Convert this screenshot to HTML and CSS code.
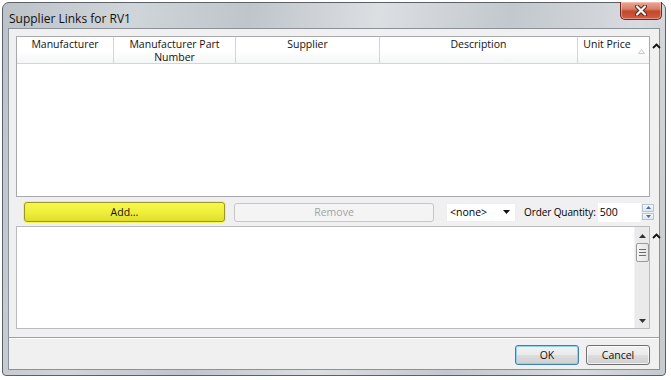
FILE: index.html
```html
<!DOCTYPE html>
<html lang="en">
<head>
  <meta charset="UTF-8" />
  <title>Supplier Links for RV1</title>
  <link rel="stylesheet" href="styles.css">
</head>
<body>
  <div class="window">
    <div class="titlebar">
      <span class="title">Supplier Links for RV1</span>
      <button class="close-btn">
        <svg width="14" height="11" viewBox="0 0 14 11">
          <path d="M3 1.5 L11 9.5 M11 1.5 L3 9.5" stroke="#5a2418" stroke-width="4" stroke-linecap="round"/>
          <path d="M3 1.5 L11 9.5 M11 1.5 L3 9.5" stroke="#ffffff" stroke-width="2.2" stroke-linecap="round"/>
        </svg>
      </button>
    </div>

    <div class="client">
      <div class="pane">
        <div class="grid-box">
          <div class="grid-head">
            <div class="col">Manufacturer</div>
            <div class="col">Manufacturer Part<br>Number</div>
            <div class="col">Supplier</div>
            <div class="col">Description</div>
            <div class="col col-sort">Unit Price
              <svg class="sort-mark" width="7" height="5" viewBox="0 0 7 5"><path d="M0.5 4.5 L3.5 0.5 L6.5 4.5 Z" fill="none" stroke="#c9c9c9"/></svg>
            </div>
          </div>
        </div>
        <div class="splitter">
          <svg width="9" height="6" viewBox="0 0 9 6"><path d="M1 5 L4.5 1.5 L8 5" fill="none" stroke="#111" stroke-width="1.8"/></svg>
        </div>
      </div>

      <div class="toolbar">
        <button class="btn btn-add">Add...</button>
        <button class="btn btn-remove" disabled>Remove</button>
        <div class="combo">
          <span>&lt;none&gt;</span>
          <svg width="7" height="4" viewBox="0 0 7 4"><path d="M0 0 L7 0 L3.5 4 Z" fill="#111"/></svg>
        </div>
        <span class="qty-label">Order Quantity:</span>
        <div class="qty-input">500</div>
        <div class="spinner">
          <div class="spin-btn"><svg width="5" height="3" viewBox="0 0 5 3"><path d="M0 3 L2.5 0 L5 3 Z" fill="#4a6f96"/></svg></div>
          <div class="spin-btn"><svg width="5" height="3" viewBox="0 0 5 3"><path d="M0 0 L5 0 L2.5 3 Z" fill="#4a6f96"/></svg></div>
        </div>
      </div>

      <div class="pane pane-memo">
        <div class="memo">
          <div class="memo-text"></div>
          <div class="vscroll">
            <svg class="arrow" width="7" height="4" viewBox="0 0 7 4"><path d="M0 4 L3.5 0 L7 4 Z" fill="#333"/></svg>
            <div class="thumb">
              <span></span><span></span><span></span>
            </div>
            <div class="track"></div>
            <svg class="arrow" width="7" height="4" viewBox="0 0 7 4"><path d="M0 0 L7 0 L3.5 4 Z" fill="#333"/></svg>
          </div>
        </div>
        <div class="splitter">
          <svg width="9" height="6" viewBox="0 0 9 6"><path d="M1 5 L4.5 1.5 L8 5" fill="none" stroke="#111" stroke-width="1.8"/></svg>
        </div>
      </div>

      <div class="footer">
        <button class="btn btn-ok">OK</button>
        <button class="btn">Cancel</button>
      </div>
    </div>
  </div>
</body>
</html>
```

FILE: styles.css
```css
* { margin: 0; padding: 0; box-sizing: border-box; }

body {
  background: #ffffff;
  font-family: "Open Sans", "Noto Sans", sans-serif;
  font-size: 10.5px;
  color: #000;
}

.window {
  margin: 2px 0 0 2px;
  width: 664px;
  height: 374px;
  border: 1px solid #5b6168;
  border-radius: 7px 7px 4px 4px;
  padding: 0 5px 5px 5px;
  background: linear-gradient(100deg, #bcc2c8 0%, #d0d5d9 18%, #bfc5cb 34%, #dcdfe2 52%, #c2c8cd 70%, #d8dbdf 88%, #c5cacf 100%);
  display: flex;
  flex-direction: column;
}

.titlebar {
  height: 25px;
  display: flex;
  align-items: flex-start;
}

.title {
  margin: 7px 0 0 1px;
  font-size: 12px;
  color: #111;
}

.close-btn {
  margin: -1px -2px 0 auto;
  width: 42px;
  height: 18px;
  border: 1px solid #6b2a1f;
  border-top: none;
  border-radius: 0 0 5px 5px;
  background: linear-gradient(#e9a896 0%, #d98068 40%, #c4472c 55%, #cf5e40 100%);
  box-shadow: inset 0 0 0 1px rgba(255, 220, 210, 0.45);
  display: flex;
  align-items: center;
  justify-content: center;
}

.client {
  flex: 1;
  border: 1px solid #8b9198;
  background: #f0f0f0;
  padding: 7px 0 0 7px;
  display: flex;
  flex-direction: column;
}

.pane {
  display: flex;
  height: 161px;
}

.pane-memo {
  height: 103px;
  margin-top: 4px;
}

.splitter {
  width: 9px;
  padding: 2px 0 0 2px;
}

.grid-box {
  flex: 1;
  border: 1px solid #a7a9ad;
  background: #ffffff;
}

.grid-head {
  display: grid;
  grid-template-columns: 97px 122px 144px 198px 1fr;
  height: 27px;
  border-bottom: 1px solid #d5d5d5;
  background: linear-gradient(#ffffff 0%, #ffffff 50%, #f5f6f7 100%);
}

.col {
  border-right: 1px solid #d5d5d5;
  text-align: center;
  line-height: 13px;
  padding-top: 1px;
  color: #111;
}

.col:last-child { border-right: none; }

.col-sort {
  position: relative;
  padding-right: 13px;
}

.sort-mark {
  position: absolute;
  right: 4px;
  bottom: 10px;
}

.toolbar {
  display: flex;
  align-items: center;
  height: 20px;
  margin-top: 5px;
  padding: 0 5px 0 8px;
}

.btn {
  font-family: inherit;
  font-size: 10.5px;
  color: #111;
  height: 20px;
  width: 64px;
  border: 1px solid #707070;
  border-radius: 3px;
  background: linear-gradient(#f2f2f2 0%, #ebebeb 48%, #dddddd 52%, #cfcfcf 100%);
  box-shadow: inset 0 0 0 1px rgba(255, 255, 255, 0.7);
}

.btn-add {
  width: 201px;
  flex: none;
  border-color: #9c9626;
  background: linear-gradient(#f7f74c 0%, #efef3c 50%, #e0de2e 100%);
  box-shadow: 0 0 0 1px #f5f560;
}

.btn-remove {
  width: 200px;
  flex: none;
  height: 19px;
  margin-left: 9px;
  border-color: #c6c6c6;
  background: #f4f4f4;
  box-shadow: none;
  color: #a3a3a3;
}

.combo {
  margin-left: 12px;
  width: 70px;
  flex: none;
  height: 19px;
  background: #ffffff;
  border: 1px solid #eceef0;
  display: flex;
  align-items: center;
  justify-content: space-between;
  padding: 0 5px 0 3px;
}

.qty-label {
  margin-left: 8px;
  white-space: nowrap;
  flex: none;
  font-size: 10px;
  letter-spacing: -0.1px;
}

.qty-input {
  flex: 1;
  min-width: 0;
  margin-left: 2px;
  height: 19px;
  background: #ffffff;
  line-height: 18px;
  padding-left: 2px;
}

.spinner {
  width: 12px;
  flex: none;
  height: 16px;
  margin-left: 1px;
  display: flex;
  flex-direction: column;
  gap: 1px;
}

.spin-btn {
  flex: 1;
  border: 1px solid #b5c3d2;
  background: linear-gradient(#f4f8fc, #dde7f1);
  display: flex;
  align-items: center;
  justify-content: center;
}

.memo {
  flex: 1;
  border: 1px solid #b9bbbe;
  background: #ffffff;
  display: flex;
}

.memo-text { flex: 1; }

.vscroll {
  width: 15px;
  background: #eaeaea;
  border-left: 1px solid #f3f3f3;
  display: flex;
  flex-direction: column;
  align-items: center;
  padding: 7px 0 5px;
}

.vscroll .arrow { flex: none; }

.thumb {
  margin-top: 5px;
  width: 13px;
  height: 19px;
  border: 1px solid #9a9a9a;
  border-radius: 2px;
  background: linear-gradient(90deg, #f5f5f5, #e4e4e4);
  display: flex;
  flex-direction: column;
  justify-content: center;
  align-items: center;
  gap: 2px;
}

.thumb span {
  width: 7px;
  height: 1px;
  background: #6b6b6b;
}

.track { flex: 1; }

.footer {
  margin-top: 8px;
  margin-left: -7px;
  flex: 1;
  border-top: 1px solid #a0a0a0;
  box-shadow: inset 0 1px 0 #ffffff;
  display: flex;
  justify-content: flex-end;
  align-items: flex-start;
  gap: 7px;
  padding: 7px 9px 0 0;
}

.btn-ok {
  border-color: #3c7fb1;
  box-shadow: inset 0 0 0 1px #8fd0f3;
}
```
